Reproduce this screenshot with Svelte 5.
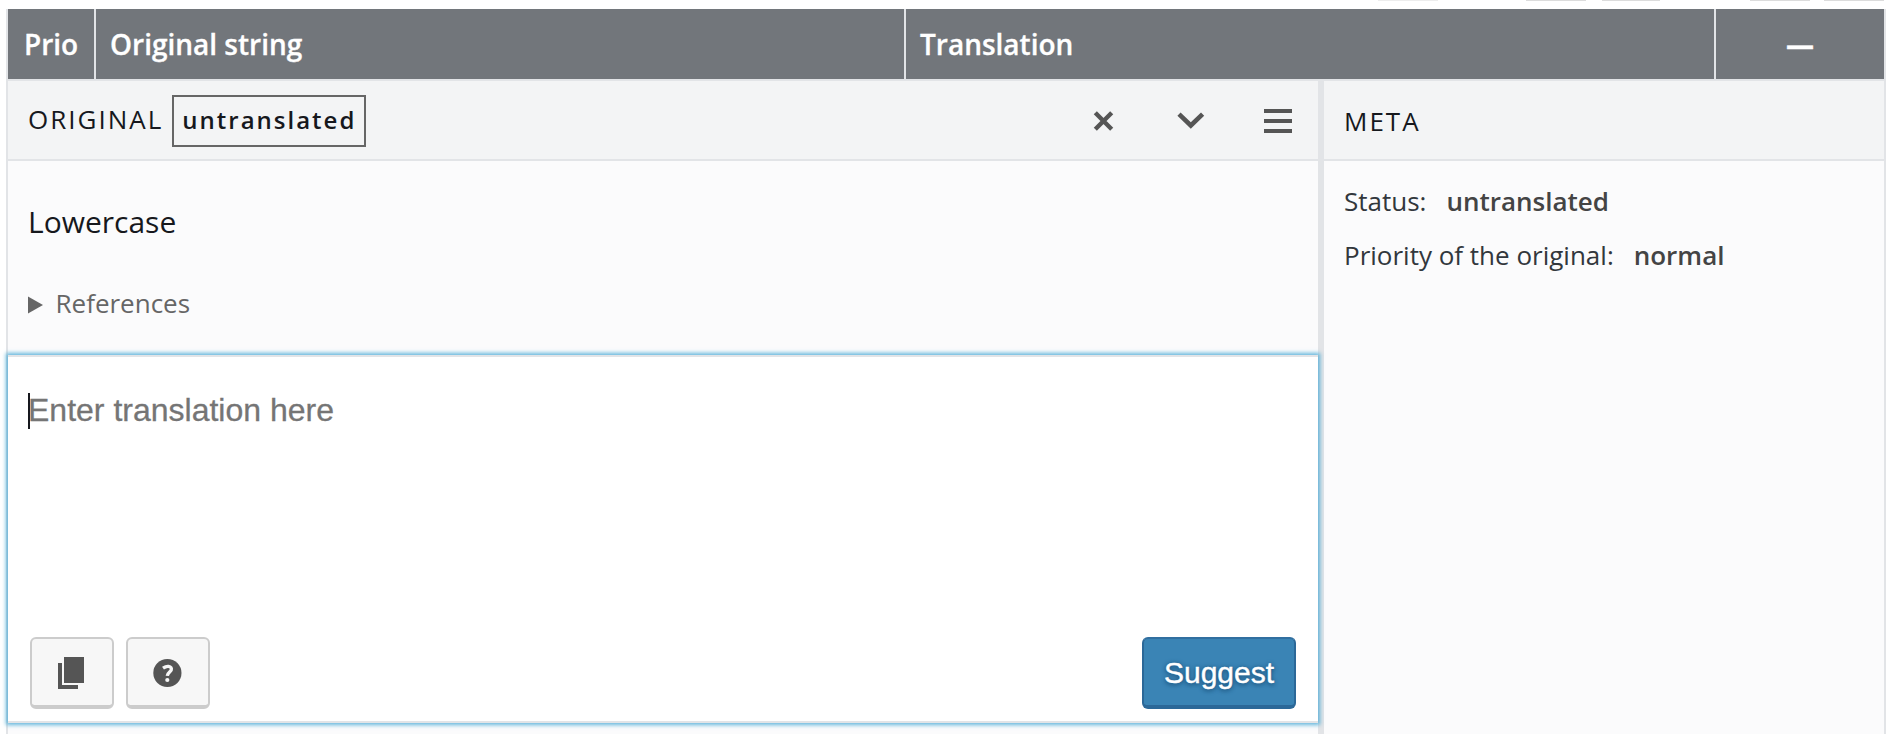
<script>
  const columns = [
    { key: 'prio', label: 'Prio' },
    { key: 'original', label: 'Original string' },
    { key: 'translation', label: 'Translation' },
    { key: 'actions', label: '—' }
  ];
  const meta = [
    { term: 'Status:', value: 'untranslated' },
    { term: 'Priority of the original:', value: 'normal' }
  ];
</script>

<div class="page">
  <div class="filters">
    {#each ['a', 'b', 'c', 'd', 'e'] as f}<span class="edge {f}"></span>{/each}
  </div>
  <div class="table">
    <header class="columns">
      {#each columns as column}<div class="th {column.key}"><span>{column.label}</span></div>{/each}
    </header>
    <div class="editor">
      <section class="left">
        <div class="panel-head">
          <h3>ORIGINAL</h3>
          <span class="badge">untranslated</span>
          <nav>
            <button aria-label="Close">
              <svg width="48" height="48" viewBox="0 0 48 48"><path d="M15.3 15.8 31.7 32.2M31.7 15.8 15.3 32.2" stroke="#555" stroke-width="4.4" fill="none" /></svg>
            </button>
            <button aria-label="Next">
              <svg width="48" height="48" viewBox="0 0 48 48"><path d="M12 17.2 23.8 28.5 35.6 17.2" stroke="#555" stroke-width="4.6" fill="none" /></svg>
            </button>
            <button aria-label="Menu">
              <svg width="48" height="48" viewBox="0 0 48 48"><path d="M10 12h28v4H10zM10 22h28v4H10zM10 32h28v4H10z" fill="#555" /></svg>
            </button>
          </nav>
        </div>
        <div class="source">
          <p class="string">Lowercase</p>
          <div class="refs">
            <svg width="15" height="21" viewBox="0 0 15 21"><path d="M0 3.5 15 12 0 20.5z" fill="#666" /></svg>
            <span>References</span>
          </div>
        </div>
        <div class="entry">
          <div class="field"><i class="caret"></i><span>Enter translation here</span></div>
          <div class="tools">
            <button class="tool" aria-label="Copy original">
              <svg width="40" height="40" viewBox="0 0 40 40"><path d="M12 5h20v26H12zM6 11h4v22h16v4H6z" fill="#555" /></svg>
            </button>
            <button class="tool" aria-label="Help">
              <svg width="40" height="40" viewBox="0 0 40 40"><g transform="translate(0 1)"><circle cx="19.4" cy="20" r="14.1" fill="#555" /><path d="M15 15.2C17.2 13.7 19 13.2 20.5 13.4 23 13.7 23.7 15.3 23.2 17 22.6 19 19.5 19.4 19.3 22.9" stroke="#f7f7f7" stroke-width="3.4" fill="none" /><circle cx="19.3" cy="27" r="2.1" fill="#f7f7f7" /></g></svg>
            </button>
            <button class="suggest">Suggest</button>
          </div>
        </div>
      </section>
      <aside>
        <div class="panel-head"><h3>META</h3></div>
        <dl>
          {#each meta as item}
            <div><dt>{item.term}</dt><dd>{item.value}</dd></div>
          {/each}
        </dl>
      </aside>
    </div>
  </div>
</div>

<style>
  :global(body) { margin: 0; background: #fff; }
  .page { box-sizing: border-box; width: 1894px; height: 734px; overflow: hidden; background: #fff; font-family: 'Open Sans', sans-serif; color: #16181d; }
  .filters { display: flex; height: 9px; padding-left: 1378px; }
  .edge { height: 1px; width: 60px; flex: none; background: #dcdcdc; }
  .edge.a { background: #ededed; margin-right: 88px; }
  .edge.b { margin-right: 16px; }
  .edge.c { width: 58px; margin-right: 90px; }
  .edge.d { margin-right: 14px; }
  .table { display: flex; flex-direction: column; box-sizing: border-box; margin-left: 6px; width: 1880px; height: 725px; border: solid #e2e4e7; border-width: 0 2px; }
  .columns { display: grid; grid-template-columns: 88px 810px 810px 168px; height: 70px; flex: none; background: #72767b; border-bottom: 2px solid #e2e4e7; }
  .th { display: flex; align-items: center; box-sizing: border-box; padding-left: 15px; border-right: 2px solid #e2e4e7; color: #fff; font-size: 28px; font-weight: 600; line-height: 70px; white-space: nowrap; -webkit-text-stroke: 0.3px currentColor; }
  .th:last-child { border-right: 0; }
  .prio { padding-left: 16px; }
  .original, .translation { padding-left: 14px; }
  .actions { padding: 0; justify-content: center; font-weight: 700; }
  .editor { display: flex; flex: 1; min-height: 0; background: #fbfbfc; }
  .left { display: flex; flex-direction: column; width: 1310px; flex: none; }
  .panel-head { display: flex; align-items: center; box-sizing: border-box; height: 80px; flex: none; padding-left: 20px; background: #f3f4f5; border-bottom: 2px solid #e2e4e7; }
  h3 { margin: 0; font-size: 26px; font-weight: 400; letter-spacing: 2px; line-height: 36px; }
  .left h3 { padding-bottom: 2px; }
  aside h3 { padding-top: 2px; }
  .badge { box-sizing: border-box; width: 194px; height: 52px; margin: 2px 0 0 9px; padding-left: 8px; border: 2px solid #666; font-size: 24px; font-weight: 600; letter-spacing: 2px; line-height: 46px; }
  nav { display: flex; margin-left: auto; gap: 39px; padding: 2px 16px 0 0; }
  button { font-family: 'Liberation Sans', Arial, sans-serif; }
  nav button { display: flex; padding: 0; border: 0; background: none; }
  .source { height: 194px; flex: none; padding-left: 20px; box-sizing: border-box; }
  .string { margin: 40px 0 0; font-size: 30px; line-height: 42px; }
  .refs { display: flex; align-items: center; gap: 12.5px; margin-top: 42px; color: #666; font-size: 26px; line-height: 36px; }
  .entry { position: relative; display: flex; flex-direction: column; box-sizing: border-box; height: 368px; flex: none; background: #fff; border: solid #e2e4e7; border-width: 2px 0; box-shadow: 0 0 4px 2px rgba(50, 160, 210, 0.75); }
  .field { display: flex; align-items: center; height: 36px; margin: 36px 0 0 20px; color: #757575; font-family: 'Liberation Sans', Arial, sans-serif; font-size: 32px; line-height: 36px; }
  .field span { padding-bottom: 2px; -webkit-text-stroke: 0.3px currentColor; }
  .caret { width: 2px; height: 36px; margin-right: -2px; background: #16181d; }
  .tools { display: flex; gap: 12px; margin: auto 22px 12px; }
  .tool, .suggest { display: flex; align-items: center; justify-content: center; box-sizing: border-box; height: 72px; border: 2px solid #ccc; border-bottom-width: 4px; border-radius: 6px; background: #f7f7f7; }
  .tool { width: 84px; padding: 0; }
  .suggest { width: 154px; margin-left: auto; padding: 2px 0 0; color: #fff; font-size: 30px; background: #3a84b5; border-color: #2b6898; border-top-color: #316fa0; text-shadow: 0 2px 4px #215a85, 0 0 4px #215a85; -webkit-text-stroke: 0.4px currentColor; }
  aside { flex: 1; border-left: 6px solid #e2e4e7; }
  dl { margin: 0; padding: 13px 20px; display: grid; }
  dl div { display: flex; gap: 20px; height: 54px; align-items: center; font-size: 26px; }
  dt { color: #32373c; }
  dd { margin: 0; color: #444; font-weight: 600; }
</style>
